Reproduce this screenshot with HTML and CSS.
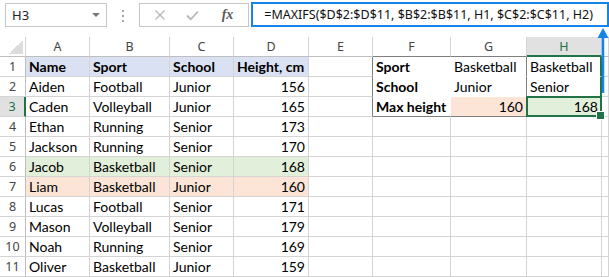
FILE: index.html
```html
<!DOCTYPE html>
<html lang="en">
<head>
    <meta charset="UTF-8">
    <title>MAXIFS example</title>
    <link rel="stylesheet" href="styles.css">
</head>
<body>
    <div class="app">

        <!-- formula bar -->
        <div class="toolbar">
            <div class="namebox">
                <span>H3</span>
                <span class="caret"></span>
            </div>
            <svg class="grip" width="4" height="14" viewBox="0 0 4 14">
                <rect x="1" y="1" width="2" height="2" fill="#a6a6a6"/>
                <rect x="1" y="6" width="2" height="2" fill="#a6a6a6"/>
                <rect x="1" y="11" width="2" height="2" fill="#a6a6a6"/>
            </svg>
            <div class="buttons">
                <svg class="icon" width="12" height="12" viewBox="0 0 12 12">
                    <path d="M1.5 1.5 L10.5 10.5 M10.5 1.5 L1.5 10.5" stroke="#b8b8b8" stroke-width="1.4" fill="none"/>
                </svg>
                <svg class="icon" width="13" height="11" viewBox="0 0 13 11">
                    <path d="M1 5.5 L4.8 9.3 L12 1.5" stroke="#b8b8b8" stroke-width="1.8" fill="none"/>
                </svg>
                <span class="fx">fx</span>
            </div>
            <div class="formula">=MAXIFS($D$2:$D$11, $B$2:$B$11, H1, $C$2:$C$11, H2)</div>
        </div>

        <!-- worksheet -->
        <div class="sheet">
            <div class="row head">
                <div class="c corner"></div>
                <div class="c">A</div>
                <div class="c">B</div>
                <div class="c">C</div>
                <div class="c">D</div>
                <div class="c">E</div>
                <div class="c tb-bottom">F</div>
                <div class="c tb-bottom">G</div>
                <div class="c active-col">H</div>
                <div class="c"></div>
            </div>
            <div class="row">
                <div class="c num">1</div>
                <div class="c b blue">Name</div>
                <div class="c b blue">Sport</div>
                <div class="c b blue">School</div>
                <div class="c b blue">Height, cm</div>
                <div class="c tb-left"></div>
                <div class="c b in">Sport</div>
                <div class="c in-mid">Basketball</div>
                <div class="c in-last">Basketball</div>
                <div class="c"></div>
            </div>
            <div class="row">
                <div class="c num">2</div>
                <div class="c">Aiden</div>
                <div class="c">Football</div>
                <div class="c">Junior</div>
                <div class="c r">156</div>
                <div class="c tb-left"></div>
                <div class="c b in">School</div>
                <div class="c in-mid">Junior</div>
                <div class="c in-last">Senior</div>
                <div class="c"></div>
            </div>
            <div class="row">
                <div class="c num active-row">3</div>
                <div class="c">Caden</div>
                <div class="c">Volleyball</div>
                <div class="c">Junior</div>
                <div class="c r">165</div>
                <div class="c tb-left"></div>
                <div class="c b in tb-bottom">Max height</div>
                <div class="c r orange tb-bottom tb-right">160</div>
                <div class="c r green tb-bottom sel">168</div>
                <div class="c"></div>
            </div>
            <div class="row">
                <div class="c num">4</div>
                <div class="c">Ethan</div>
                <div class="c">Running</div>
                <div class="c">Senior</div>
                <div class="c r">173</div>
                <div class="c"></div><div class="c"></div><div class="c"></div><div class="c"></div><div class="c"></div>
            </div>
            <div class="row">
                <div class="c num">5</div>
                <div class="c">Jackson</div>
                <div class="c">Running</div>
                <div class="c">Senior</div>
                <div class="c r">170</div>
                <div class="c"></div><div class="c"></div><div class="c"></div><div class="c"></div><div class="c"></div>
            </div>
            <div class="row">
                <div class="c num">6</div>
                <div class="c green">Jacob</div>
                <div class="c green">Basketball</div>
                <div class="c green">Senior</div>
                <div class="c r green">168</div>
                <div class="c"></div><div class="c"></div><div class="c"></div><div class="c"></div><div class="c"></div>
            </div>
            <div class="row">
                <div class="c num">7</div>
                <div class="c orange">Liam</div>
                <div class="c orange">Basketball</div>
                <div class="c orange">Junior</div>
                <div class="c r orange">160</div>
                <div class="c"></div><div class="c"></div><div class="c"></div><div class="c"></div><div class="c"></div>
            </div>
            <div class="row">
                <div class="c num">8</div>
                <div class="c">Lucas</div>
                <div class="c">Football</div>
                <div class="c">Senior</div>
                <div class="c r">171</div>
                <div class="c"></div><div class="c"></div><div class="c"></div><div class="c"></div><div class="c"></div>
            </div>
            <div class="row">
                <div class="c num">9</div>
                <div class="c">Mason</div>
                <div class="c">Volleyball</div>
                <div class="c">Senior</div>
                <div class="c r">179</div>
                <div class="c"></div><div class="c"></div><div class="c"></div><div class="c"></div><div class="c"></div>
            </div>
            <div class="row">
                <div class="c num">10</div>
                <div class="c">Noah</div>
                <div class="c">Running</div>
                <div class="c">Senior</div>
                <div class="c r">169</div>
                <div class="c"></div><div class="c"></div><div class="c"></div><div class="c"></div><div class="c"></div>
            </div>
            <div class="row">
                <div class="c num">11</div>
                <div class="c">Oliver</div>
                <div class="c">Basketball</div>
                <div class="c">Junior</div>
                <div class="c r">159</div>
                <div class="c"></div><div class="c"></div><div class="c"></div><div class="c"></div><div class="c"></div>
            </div>
        </div>

        <!-- arrow pointing at the formula -->
        <svg class="arrow" width="14" height="68" viewBox="0 0 14 68">
            <path d="M7 9 L7 66" stroke="#1683e8" stroke-width="2.5"/>
            <polygon points="1.5,11 7,1 12.5,11" fill="#1683e8"/>
        </svg>
    </div>
</body>
</html>
```

FILE: styles.css
```css
*{
    box-sizing: border-box;
    margin: 0;
    padding: 0;
}

body{
    background-color: white;
    width: 609px;
    height: 277px;
    overflow: hidden;
}

.app{
    position: relative;
    width: 609px;
    height: 277px;
}

/* formula bar */
.toolbar{
    height: 37px;
    display: flex;
    align-items: flex-start;
    padding-top: 3px;
}

.namebox{
    width: 102px;
    height: 24px;
    margin-left: 5px;
    border: 1px solid #c6c6c6;
    display: flex;
    align-items: center;
    justify-content: space-between;
    padding: 0 6px 0 6px;
    font-family: "Noto Sans", sans-serif;
    font-size: 13px;
    color: #222;
}

.caret{
    width: 0;
    height: 0;
    border-left: 4px solid transparent;
    border-right: 4px solid transparent;
    border-top: 4px solid #7a7a7a;
    margin-top: -1px;
}

.grip{
    margin: 6px 0 0 14px;
}

.buttons{
    width: 111px;
    height: 24px;
    margin-left: 14px;
    border: 1px solid #c6c6c6;
    display: flex;
    align-items: center;
    padding-left: 14px;
    gap: 20px;
}

.fx{
    font-family: "Liberation Serif", serif;
    font-style: italic;
    font-weight: bold;
    font-size: 14px;
    color: #5a5a5a;
    margin-left: 3px;
}

.formula{
    width: 359px;
    height: 25px;
    margin: -1px 0 0 2px;
    border: 2px solid #1683e8;
    padding-left: 11px;
    font-family: "Noto Sans", sans-serif;
    font-size: 12.5px;
    line-height: 21px;
    color: #111;
    white-space: nowrap;
}

/* worksheet */
.row{
    display: grid;
    grid-template-columns: 26px 64px 80px 64px 75px 64px 78px 76px 75px 1fr;
    height: 20px;
}

.c{
    border-right: 1px solid #d4d4d4;
    border-bottom: 1px solid #d4d4d4;
    padding: 0 3px;
    font-family: Lato, sans-serif;
    font-size: 14px;
    line-height: 19px;
    color: #000;
    white-space: nowrap;
    overflow: hidden;
}

.head .c{
    text-align: center;
    font-family: "Noto Sans", sans-serif;
    font-size: 12.5px;
    color: #444;
    border-bottom-color: #bfbfbf;
}

.num{
    text-align: center;
    font-family: "Noto Sans", sans-serif !important;
    font-size: 12.5px !important;
    color: #444 !important;
    padding: 0;
    border-right-color: #bfbfbf;
}

.corner{
    background: linear-gradient(135deg, transparent 50%, #dcdcdc 50%) no-repeat right 2px bottom 2px;
    background-size: 14px 14px;
}

.b{ font-weight: bold; }
.r{ text-align: right; }

.blue{ background-color: #d9e1f2; }
.green{ background-color: #e2efda; }
.orange{ background-color: #fce4d6; }

/* active cell headers */
.head .active-col{
    background-color: #e1e1e1;
    color: #217346;
    border-bottom: 2px solid #217346;
}

.active-row{
    background-color: #e1e1e1;
    color: #217346 !important;
    border-right: 2px solid #217346;
}

/* lookup table F1:H3 */
.head .tb-bottom,
.tb-bottom{ border-bottom-color: #7f7f7f; }
.tb-left{ border-right-color: #7f7f7f; }
.tb-right{ border-right-color: #7f7f7f; }

.in{
    border-right-color: white;
    border-bottom-color: white;
}
.in.tb-bottom{ border-bottom-color: #7f7f7f; }

.in-mid{
    border-right-color: #7f7f7f;
    border-bottom-color: white;
}

.in-last{
    border-bottom-color: white;
    border-right: 2px solid #217346;
}

/* selected cell */
.sel{
    position: relative;
    overflow: visible;
}

.sel::after{
    content: "";
    position: absolute;
    top: -1px;
    left: -1px;
    right: -1px;
    bottom: -1px;
    border: 2px solid #217346;
}

.sel::before{
    content: "";
    position: absolute;
    right: -4px;
    bottom: -4px;
    width: 7px;
    height: 7px;
    background-color: #217346;
    border: 1px solid white;
    z-index: 1;
}

.arrow{
    position: absolute;
    left: 596px;
    top: 27px;
}
```
